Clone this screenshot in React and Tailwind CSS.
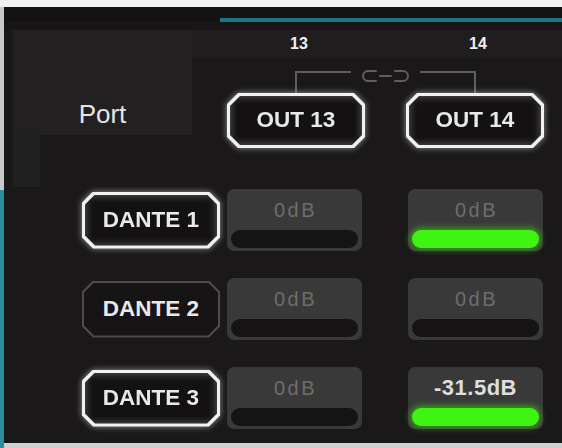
import React from 'react';

const outerCut =
  '[clip-path:polygon(11px_0,calc(100%_-_11px)_0,100%_11px,100%_calc(100%_-_11px),calc(100%_-_11px)_100%,11px_100%,0_calc(100%_-_11px),0_11px)]';
const innerCut =
  '[clip-path:polygon(10px_0,calc(100%_-_10px)_0,100%_10px,100%_calc(100%_-_10px),calc(100%_-_10px)_100%,10px_100%,0_calc(100%_-_10px),0_10px)]';

function PortButton({ label, active = true, tall = false }) {
  return (
    <div
      className={`w-[138px] ${tall ? 'h-[57px]' : 'h-[55px]'} ${
        active ? 'drop-shadow-[0_0_3px_rgba(255,255,255,0.55)]' : ''
      }`}
    >
      <div
        className={`h-full w-full ${outerCut} ${
          active ? 'bg-[#f1f1f1] p-[3px]' : 'bg-[#4d4b4c] p-[2px]'
        }`}
      >
        <div
          className={`flex h-full w-full items-center justify-center ${innerCut} ${
            active
              ? 'bg-[#131112] shadow-[inset_0_0_9px_rgba(255,255,255,0.35)]'
              : 'bg-[#161415]'
          }`}
        >
          <span className="text-[22.5px] font-bold leading-none text-[#e9e9e9]">{label}</span>
        </div>
      </div>
    </div>
  );
}

function LevelBox({ value, on = false, bright = false }) {
  return (
    <div className="flex h-[62px] w-[135px] flex-col rounded-[7px] bg-[#3a3939]">
      <div className="flex flex-1 items-center justify-center pt-[1px]">
        <span
          className={
            bright
              ? 'text-[22px] font-bold leading-none tracking-[0.5px] text-[#dedede]'
              : 'pl-[2px] text-[20px] leading-none tracking-[2.5px] text-[#6e6d6d]'
          }
        >
          {value}
        </span>
      </div>
      <div
        className={`mx-[4px] mb-[3px] h-[18px] rounded-full ${
          on ? 'bg-[#3ef412] shadow-[0_0_6px_2px_rgba(62,244,18,0.55)]' : 'bg-[#151314]'
        }`}
      />
    </div>
  );
}

function LinkBracket() {
  return (
    <svg width="317" height="24" viewBox="0 0 317 24" fill="none" stroke="#5f5e5e" strokeWidth="2">
      <path d="M69 24 V3 H124" />
      <path d="M193 3 H248 V24" />
      <path d="M149 2 H141 a5 5 0 0 0 0 10 H149" strokeLinecap="round" />
      <path d="M153 7 H164" strokeLinecap="round" />
      <path d="M168 2 H176 a5 5 0 0 1 0 10 H168" strokeLinecap="round" />
    </svg>
  );
}

const rows = [
  { name: 'DANTE 1', active: true, a: { value: '0dB' }, b: { value: '0dB', on: true } },
  { name: 'DANTE 2', active: false, a: { value: '0dB' }, b: { value: '0dB' } },
  { name: 'DANTE 3', active: true, a: { value: '0dB' }, b: { value: '-31.5dB', on: true, bright: true } },
];

export default function App() {
  return (
    <div className="flex h-[448px] w-[562px] flex-col overflow-hidden bg-[#f2f2f2] font-['Liberation_Sans',Arial,sans-serif]">
      <div className="h-[7px] shrink-0" />
      <div className="flex flex-1">
        {/* left edge */}
        <div className="flex w-[4px] flex-col">
          <div className="h-[183px] bg-[#c9c9c9]" />
          <div className="flex-1 bg-[#2a8e9a]" />
        </div>

        <div className="flex flex-1 flex-col bg-[#1a1819]">
          <div className="h-[11px] bg-[#141213]" />
          <div className="flex h-[4px]">
            <div className="w-[216px] bg-[#141213]" />
            <div className="flex-1 bg-[#1a7884]" />
          </div>
          <div className="h-[8px] bg-[#171516]" />

          {/* header: port label + outputs */}
          <div className="flex h-[157px]">
            <div className="w-[9px]" />
            <div className="flex w-[179px] flex-col">
              <div className="flex h-[105px] justify-center bg-[#222021] pt-[71px]">
                <span className="text-[26px] leading-none text-[#e4e4e4]">Port</span>
              </div>
              <div className="flex flex-1">
                <div className="w-[27px] bg-[#212021]" />
              </div>
            </div>
            <div className="flex flex-1 flex-col">
              <div className="grid h-[28px] grid-cols-[138px_138px] gap-x-[41px] bg-[#1f1d1e] pl-[35px] pt-[6px]">
                <span className="pl-[6px] text-center text-[16px] font-bold leading-none text-[#f0f0f0]">13</span>
                <span className="pl-[6px] text-center text-[16px] font-bold leading-none text-[#f0f0f0]">14</span>
              </div>
              <div className="flex flex-col pl-[35px] pt-[11px]">
                <LinkBracket />
                <div className="grid grid-cols-[138px_138px] gap-x-[41px]">
                  <PortButton label="OUT 13" />
                  <PortButton label="OUT 14" />
                </div>
              </div>
            </div>
          </div>

          {/* input rows */}
          <div className="flex flex-col gap-[27px] pl-[78px] pt-[2px]">
            {rows.map((row) => (
              <div key={row.name} className="flex h-[62px] items-center">
                <PortButton label={row.name} active={row.active} tall />
                <div className="ml-[7px]">
                  <LevelBox {...row.a} />
                </div>
                <div className="ml-[46px]">
                  <LevelBox {...row.b} />
                </div>
              </div>
            ))}
          </div>
          <div className="flex-1" />
          <div className="h-[5px] bg-[#cfcfcf]" />
        </div>
      </div>
    </div>
  );
}
